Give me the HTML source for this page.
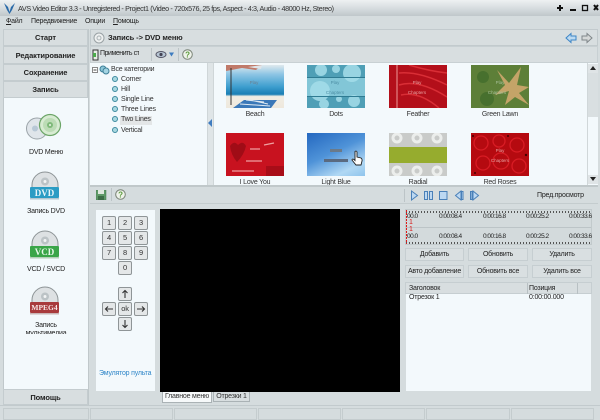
<!DOCTYPE html>
<html><head><meta charset="utf-8">
<style>
html,body{margin:0;padding:0;width:600px;height:420px;overflow:hidden;background:#d5dcde}
body{font-family:"Liberation Sans",sans-serif;font-size:7px;letter-spacing:-.2px;color:#222;position:relative}
.a{position:absolute}
.t{position:absolute;white-space:nowrap}
.c{text-align:center}
.nav{position:absolute;left:3px;width:85px;background:#d8dee0;border:1px solid #c4cccf;box-sizing:border-box;text-align:center;font-weight:bold;font-size:7.5px;letter-spacing:-.1px;color:#222}
.key{position:absolute;width:14px;height:14px;box-sizing:border-box;background:#e4e7e8;border:1px solid #8f9597;border-radius:2px;text-align:center;font-size:7.5px;line-height:12px;color:#333}
.btn{position:absolute;height:13px;box-sizing:border-box;background:#d9dfe1;border:1px solid #c6ced1;text-align:center;font-size:7px;line-height:11px;color:#222;white-space:nowrap;overflow:hidden}
.thumb{position:absolute;width:58px;height:43px;overflow:hidden}
.thumb text{font-family:"Liberation Sans",sans-serif;font-size:4.5px;text-anchor:middle;letter-spacing:0}
.lab{position:absolute;width:82px;text-align:center;font-size:7px;color:#333;white-space:nowrap}
.dot{position:absolute;width:4px;height:4px;border-radius:50%;background:#a8d8e0;border:1px solid #3e8ba0;left:112px}
.tree{position:absolute;font-size:7px;color:#333;left:121px;white-space:nowrap}
.tm{position:absolute;white-space:nowrap;font-size:6.5px;letter-spacing:-.5px;color:#222}
.cell{position:absolute;top:408px;height:12px;border:1px solid #c4ccce;box-sizing:border-box}
</style></head><body>

<!-- title bar -->
<div class="a" style="left:0;top:0;width:600px;height:16px;background:linear-gradient(#eef1f2,#d3d9dc 60%,#bfc7ca)"></div>
<svg class="a" style="left:4px;top:3px" width="11" height="11" viewBox="0 0 11 11"><path d="M0 0L4 4L5.5 9L7 4L11 0L8 7L5.5 11L3 7Z" fill="#2a6aa8"/></svg>
<div class="t" style="left:18px;top:4px;font-size:7.2px;letter-spacing:-.36px;color:#333">AVS Video Editor 3.3 - Unregistered - Project1 (Video - 720x576, 25 fps, Aspect - 4:3, Audio - 48000 Hz, Stereo)</div>
<svg class="a" style="left:555px;top:3px" width="44" height="10" viewBox="0 0 44 10">
<path d="M5 2V8M2 5H8" stroke="#111" stroke-width="2"/><path d="M15 7H21" stroke="#111" stroke-width="2"/>
<rect x="27.5" y="2.5" width="5" height="5" fill="none" stroke="#111" stroke-width="1.3"/>
<path d="M39 2L43 7M43 2L39 7" stroke="#111" stroke-width="2"/></svg>

<!-- menu -->
<div class="t" style="left:6px;top:18px;color:#222"><u>Ф</u>айл</div>
<div class="t" style="left:31px;top:18px;color:#222">Передвижение</div>
<div class="t" style="left:85px;top:18px;color:#222">Опции</div>
<div class="t" style="left:113px;top:18px;color:#222"><u>П</u>омощь</div>

<!-- left nav -->
<div class="a" style="left:3px;top:29px;width:86px;height:376px;background:#f3f9fc;border:1px solid #c0c8cb;box-sizing:border-box"></div>
<div class="nav" style="top:29px;height:17px;line-height:16px">Старт</div>
<div class="nav" style="top:46px;height:18px;line-height:17px">Редактирование</div>
<div class="nav" style="top:64px;height:17px;line-height:16px">Сохранение</div>
<div class="nav" style="top:81px;height:17px;line-height:16px">Запись</div>
<div class="nav" style="top:389px;height:16px;line-height:15px">Помощь</div>

<!-- DVD menu icon -->
<svg class="a" style="left:25px;top:113px" width="38" height="28" viewBox="0 0 38 28">
<circle cx="12" cy="15.5" r="10.5" fill="#dfe5ea" stroke="#9aa3a8"/><circle cx="10" cy="15.5" r="3" fill="#b8c8d6"/>
<circle cx="25" cy="12" r="10.5" fill="#d7ebd2" stroke="#6ba567" stroke-width="1.2"/>
<circle cx="25" cy="12" r="7" fill="#bcdcb6"/><circle cx="25" cy="12" r="3" fill="#7fb97a"/><circle cx="25" cy="12" r="1" fill="#eaf5e8"/></svg>
<div class="t c" style="left:3px;width:86px;top:149px">DVD Меню</div>

<!-- DVD -->
<svg class="a" style="left:29px;top:171px" width="32" height="32" viewBox="0 0 32 32">
<path d="M3 14A13 13 0 0 1 29 14V20H3Z" fill="#dde1e3" stroke="#8d9496"/><circle cx="16" cy="10.5" r="4" fill="#bcc3c6"/><circle cx="16" cy="10.5" r="1.5" fill="#f2f4f5"/>
<rect x="1" y="16" width="29" height="11" rx="1" fill="#2b9cc4"/><rect x="1" y="27" width="29" height="1.5" fill="#b3c7cf"/></svg>
<div class="t c" style="left:30px;width:29px;top:188px;font-family:'Liberation Serif',serif;font-weight:bold;font-size:9px;letter-spacing:0;color:#e8f6fa">DVD</div>
<div class="t c" style="left:3px;width:86px;top:208px">Запись DVD</div>

<!-- VCD -->
<svg class="a" style="left:29px;top:230px" width="32" height="32" viewBox="0 0 32 32">
<path d="M3 14A13 13 0 0 1 29 14V20H3Z" fill="#dde1e3" stroke="#8d9496"/><circle cx="16" cy="10.5" r="4" fill="#bcc3c6"/><circle cx="16" cy="10.5" r="1.5" fill="#f2f4f5"/>
<rect x="1" y="16" width="29" height="11" rx="1" fill="#3aa548"/><rect x="1" y="27" width="29" height="1.5" fill="#b3cfb6"/></svg>
<div class="t c" style="left:30px;width:29px;top:247px;font-family:'Liberation Serif',serif;font-weight:bold;font-size:9px;letter-spacing:0;color:#e8f8ea">VCD</div>
<div class="t c" style="left:3px;width:86px;top:266px">VCD / SVCD</div>

<!-- MPEG4 -->
<svg class="a" style="left:29px;top:286px" width="32" height="32" viewBox="0 0 32 32">
<path d="M3 14A13 13 0 0 1 29 14V20H3Z" fill="#dde1e3" stroke="#8d9496"/><circle cx="16" cy="10.5" r="4" fill="#bcc3c6"/><circle cx="16" cy="10.5" r="1.5" fill="#f2f4f5"/>
<rect x="1" y="16" width="29" height="11" rx="1" fill="#a83a3c"/><rect x="1" y="27" width="29" height="1.5" fill="#c9b5b5"/></svg>
<div class="t c" style="left:30px;width:29px;top:303px;font-family:'Liberation Serif',serif;font-weight:bold;font-size:7.5px;letter-spacing:0;color:#f8e8e8">MPEG4</div>
<div class="t c" style="left:3px;width:86px;top:322px">Запись</div>
<div class="a" style="left:3px;width:86px;top:331px;height:3px;overflow:hidden"><div class="t c" style="left:0;width:86px;top:-1px">мультимедиа</div></div>

<!-- header -->
<div class="a" style="left:90px;top:29px;width:508px;height:17px;background:#d8dee0;border:1px solid #c2cacd;box-sizing:border-box"></div>
<svg class="a" style="left:93px;top:32px" width="12" height="12" viewBox="0 0 12 12"><circle cx="6" cy="6" r="5" fill="#eef0f0" stroke="#9aa2a5"/><circle cx="6" cy="6" r="2" fill="none" stroke="#aab2b5"/></svg>
<div class="t" style="left:108px;top:33px;font-weight:bold;font-size:7.5px;letter-spacing:-.1px;color:#222">Запись -&gt; DVD меню</div>
<svg class="a" style="left:565px;top:32px" width="28" height="12" viewBox="0 0 28 12">
<path d="M1 6L6 1.5V4H11V8H6V10.5Z" fill="#bcdaf2" stroke="#3d85c6"/>
<path d="M27 6L22 1.5V4H17V8H22V10.5Z" fill="#d5d8d8" stroke="#80878a"/></svg>

<!-- toolbar -->
<div class="a" style="left:90px;top:46px;width:508px;height:17px;background:#d8dee0;border:1px solid #c8d0d3;box-sizing:border-box"></div>
<svg class="a" style="left:92px;top:49px" width="8" height="12" viewBox="0 0 8 12"><rect x="1" y="1" width="5" height="10" fill="#e8eee8" stroke="#333"/><rect x="1" y="4" width="3" height="4" fill="#4caa4c"/></svg>
<div class="t" style="left:100px;top:50px;width:39px;overflow:hidden;color:#222;letter-spacing:-.45px">Применить стиль</div>
<div class="a" style="left:151px;top:48px;width:1px;height:13px;background:#bcc4c7"></div>
<svg class="a" style="left:155px;top:50px" width="20" height="9" viewBox="0 0 20 9"><ellipse cx="6" cy="4.5" rx="5" ry="3" fill="#b7c6d4" stroke="#556"/><circle cx="6" cy="4.5" r="1.6" fill="#445"/><path d="M14 2.5H19L16.5 6.5Z" fill="#3d7cc0"/></svg>
<div class="a" style="left:178px;top:48px;width:1px;height:13px;background:#bcc4c7"></div>
<svg class="a" style="left:182px;top:49px" width="11" height="11" viewBox="0 0 11 11"><circle cx="5.5" cy="5.5" r="4.8" fill="#eef2ea" stroke="#7c8579"/><text x="5.5" y="8.3" font-size="8" text-anchor="middle" font-weight="bold" font-family="Liberation Sans" fill="#5a9a3a">?</text></svg>

<!-- content -->
<div class="a" style="left:90px;top:63px;width:508px;height:122px;background:#f3f9fc"></div>
<div class="a" style="left:207px;top:63px;width:7px;height:122px;background:#dfe5e7;border-left:1px solid #cfd6d8;border-right:1px solid #cfd6d8;box-sizing:border-box"></div>
<svg class="a" style="left:208px;top:119px" width="5" height="8" viewBox="0 0 5 8"><path d="M4 0V8L0 4Z" fill="#3f7cc0"/></svg>

<!-- tree -->
<svg class="a" style="left:92px;top:65px" width="18" height="10" viewBox="0 0 18 10"><rect x="0.5" y="2.5" width="5" height="5" fill="#fff" stroke="#888"/><path d="M1.5 5H4.5" stroke="#444"/><circle cx="11" cy="4" r="3" fill="#8cc6d8" stroke="#3e7f98"/><circle cx="14" cy="6" r="3" fill="#a4d4e2" stroke="#3e7f98"/></svg>
<div class="tree" style="left:111px;top:66px">Все категории</div>
<div class="dot" style="top:76px"></div><div class="tree" style="top:76px">Corner</div>
<div class="dot" style="top:86px"></div><div class="tree" style="top:86px">Hill</div>
<div class="dot" style="top:96px"></div><div class="tree" style="top:96px">Single Line</div>
<div class="dot" style="top:106px"></div><div class="tree" style="top:106px">Three Lines</div>
<div class="a" style="left:120px;top:116px;width:32px;height:9px;background:#e3e6e7"></div>
<div class="dot" style="top:116px"></div><div class="tree" style="top:116px">Two Lines</div>
<div class="dot" style="top:127px"></div><div class="tree" style="top:127px">Vertical</div>

<!-- row 1 -->
<div class="thumb" style="left:226px;top:65px;background:linear-gradient(#dfe9ee 0,#8cc4e4 22%,#3f9fcf 50%,#1a7fb5 68%,#f0ede4 73%,#eee8dc 100%)">
<svg width="58" height="43" style="position:absolute;left:0;top:0"><path d="M0 0H36L30 5L16 3L0 6Z" fill="#c07a6a"/><path d="M36 0L35 4L22 2Z" fill="#dfe4e8"/><path d="M5 3V40" stroke="#333" stroke-width="1"/><path d="M7 43L18 35H51L45 43Z" fill="#3a78b8"/><path d="M20 35L38 37M24 35L42 39M14 39L44 41" stroke="#dfeaf2"/><text x="28" y="19" fill="#6a7f90">Play</text></svg></div>
<div class="lab" style="left:214px;top:111px">Beach</div>

<div class="thumb" style="left:307px;top:65px;background:#52a5bc">
<svg width="58" height="43"><rect width="58" height="43" fill="#4f9fb6"/><rect y="13" width="58" height="18" fill="#8fd0e0" opacity=".8"/><g fill="#a5deea" opacity=".85"><circle cx="14" cy="5" r="6"/><circle cx="29" cy="4" r="4"/><circle cx="45" cy="8" r="9"/><circle cx="13" cy="26" r="10"/><circle cx="47" cy="36" r="6"/><circle cx="17" cy="39" r="5"/><circle cx="32" cy="34" r="3"/></g><rect y="31" width="58" height="1" fill="#2f7b92"/><rect y="12" width="58" height="1" fill="#2f7b92"/><text x="28" y="19" fill="#4d8fa5">Play</text><text x="28" y="29" fill="#4d8fa5">Chapters</text></svg></div>
<div class="lab" style="left:295px;top:111px">Dots</div>

<div class="thumb" style="left:389px;top:65px;background:#b00e18">
<svg width="58" height="43"><rect width="58" height="43" fill="#b30f1a"/><path d="M8 0V43" stroke="#ee9a98" stroke-width="1"/><path d="M10 8Q30 6 58 20M10 20Q30 14 58 32M12 30Q30 26 50 43M20 0Q40 6 58 8" stroke="#d92e36" stroke-width="1.5" fill="none"/><text x="28" y="19" fill="#e8a0a0">Play</text><text x="28" y="29" fill="#e8a0a0">Chapters</text></svg></div>
<div class="lab" style="left:377px;top:111px">Feather</div>

<div class="thumb" style="left:471px;top:65px;background:#587c36">
<svg width="58" height="43"><rect width="58" height="43" fill="#5d7f38"/><path d="M26 5L38 18L50 2L46 20L58 22L48 28L58 40L44 32L34 40L38 26L24 30L34 20Z" fill="#c4a468"/><g fill="#3f6a2a" opacity=".7"><circle cx="12" cy="12" r="6"/><circle cx="16" cy="34" r="7"/></g><text x="29" y="19" fill="#a8c09a">Play</text><text x="26" y="29" fill="#a8c09a">Chapters</text></svg></div>
<div class="lab" style="left:459px;top:111px">Green Lawn</div>

<!-- row 2 -->
<div class="thumb" style="left:226px;top:133px;background:#c4101e">
<svg width="58" height="43"><rect width="58" height="43" fill="#c8121f"/><path d="M4 13Q8 7 12 12Q17 7 20 13Q18 22 11 29Q5 22 4 13Z" fill="#a00c16"/><path d="M24 16H34M38 12L48 10M20 28H36M6 38H28" stroke="#efa0a0" stroke-width="1.2"/><rect y="33" x="40" width="18" height="10" fill="#a80d18"/></svg></div>
<div class="thumb" style="left:307px;top:133px;background:linear-gradient(155deg,#2468c0 0,#4f93d8 45%,#b0d8f4 80%,#8fc4ec 100%)">
<svg width="58" height="43"><rect x="23" y="16" width="12" height="3" fill="#6a7a8a"/><rect x="17" y="26" width="24" height="3" fill="#5a6a80"/></svg></div>
<div class="thumb" style="left:389px;top:133px;background:#c9cbc9">
<svg width="58" height="43"><g fill="none" stroke="#eceeec" stroke-width="3"><circle cx="8" cy="5" r="4"/><circle cx="28" cy="5" r="4"/><circle cx="48" cy="5" r="4"/><circle cx="8" cy="38" r="4"/><circle cx="28" cy="38" r="4"/><circle cx="48" cy="38" r="4"/></g><rect y="14" width="58" height="16" fill="#96ac2e"/></svg></div>
<div class="thumb" style="left:471px;top:133px;background:#b80b12">
<svg width="58" height="43"><rect width="58" height="43" fill="#b50a10"/><g fill="none" stroke="#d81c24" stroke-width="1.3"><circle cx="10" cy="10" r="7"/><circle cx="28" cy="8" r="6"/><circle cx="46" cy="12" r="7"/><circle cx="12" cy="30" r="7"/><circle cx="30" cy="28" r="8"/><circle cx="48" cy="33" r="7"/></g><g fill="#400"><circle cx="2" cy="3" r="1"/><circle cx="55" cy="22" r="1.2"/><circle cx="4" cy="40" r="1"/><circle cx="37" cy="3" r="1"/></g><text x="29" y="19" fill="#e8a0a0">Play</text><text x="29" y="29" fill="#e8a0a0">Chapters</text></svg></div>
<svg class="a" style="left:351px;top:150px" width="12" height="16" viewBox="0 0 12 16"><path d="M4 1.5Q5.5 0.5 6 2V7L10 8Q11.5 9 11 11L10 15H5L1 10Q1 8.5 3 9.5L4 10.5Z" fill="#fff" stroke="#222" stroke-width="0.9"/></svg>

<div class="a" style="left:214px;top:178px;width:373px;height:7px;overflow:hidden">
<div class="lab" style="left:0;top:1px">I Love You</div>
<div class="lab" style="left:81px;top:1px">Light Blue</div>
<div class="lab" style="left:163px;top:1px">Radial</div>
<div class="lab" style="left:245px;top:1px">Red Roses</div>
</div>

<!-- scrollbar -->
<div class="a" style="left:587px;top:63px;width:11px;height:122px;background:#f3f9fc;border-left:1px solid #d0d7d9;box-sizing:border-box"></div>
<div class="a" style="left:588px;top:64px;width:10px;height:9px;background:#dfe4e6"></div>
<svg class="a" style="left:590px;top:66px" width="6" height="4"><path d="M0 4H6L3 0Z" fill="#222"/></svg>
<div class="a" style="left:588px;top:73px;width:10px;height:44px;background:#d9dfe1"></div>
<div class="a" style="left:588px;top:175px;width:10px;height:9px;background:#dfe4e6"></div>
<svg class="a" style="left:590px;top:177px" width="6" height="4"><path d="M0 0H6L3 4Z" fill="#222"/></svg>

<!-- splitter -->
<div class="a" style="left:90px;top:185px;width:508px;height:2px;background:#c0c8ca"></div>
<div class="a" style="left:90px;top:203px;width:508px;height:1px;background:#c4ccce"></div>

<!-- toolbar 2 -->
<svg class="a" style="left:96px;top:190px" width="11" height="10" viewBox="0 0 11 10"><rect width="10" height="10" fill="#5f9a68" stroke="#467a50" stroke-width=".5"/><rect x="2" y="0" width="6" height="4" fill="#dfe9df"/><rect x="2" y="6" width="6" height="4" fill="#3d6e47"/></svg>
<div class="a" style="left:111px;top:188px;width:1px;height:13px;background:#bcc4c7"></div>
<svg class="a" style="left:115px;top:189px" width="11" height="11" viewBox="0 0 11 11"><circle cx="5.5" cy="5.5" r="4.8" fill="#eef2ea" stroke="#7c8579"/><text x="5.5" y="8.3" font-size="8" text-anchor="middle" font-weight="bold" font-family="Liberation Sans" fill="#5a9a3a">?</text></svg>
<div class="a" style="left:404px;top:189px;width:1px;height:13px;background:#bcc4c7"></div>
<svg class="a" style="left:410px;top:190px" width="70" height="11" viewBox="0 0 70 11" fill="#bcd8f2" stroke="#4a80b8">
<path d="M1.5 1L7.5 5.5L1.5 10Z"/>
<rect x="14.5" y="1.5" width="3" height="8"/><rect x="19.5" y="1.5" width="3" height="8"/>
<rect x="29.5" y="1.5" width="7.5" height="8"/>
<path d="M51 1V10L45.5 5.5Z"/><rect x="51.5" y="1.5" width="1.5" height="8"/>
<path d="M63 1V10L68.5 5.5Z"/><rect x="60.5" y="1.5" width="1.5" height="8"/></svg>
<div class="t" style="left:537px;top:192px;color:#222">Пред.просмотр</div>

<!-- remote panel -->
<div class="a" style="left:96px;top:210px;width:59px;height:181px;background:#f3f9fc"></div>
<div class="key" style="left:102px;top:216px">1</div><div class="key" style="left:118px;top:216px">2</div><div class="key" style="left:134px;top:216px">3</div>
<div class="key" style="left:102px;top:231px">4</div><div class="key" style="left:118px;top:231px">5</div><div class="key" style="left:134px;top:231px">6</div>
<div class="key" style="left:102px;top:246px">7</div><div class="key" style="left:118px;top:246px">8</div><div class="key" style="left:134px;top:246px">9</div>
<div class="key" style="left:118px;top:261px">0</div>
<div class="key" style="left:118px;top:287px"><svg width="12" height="12" viewBox="0 0 12 12" style="display:block"><path d="M6 10V2.5M3.5 5L6 2.5L8.5 5" fill="none" stroke="#333" stroke-width="1.1"/></svg></div>
<div class="key" style="left:102px;top:302px"><svg width="12" height="12" viewBox="0 0 12 12" style="display:block"><path d="M10 6H2.5M5 3.5L2.5 6L5 8.5" fill="none" stroke="#333" stroke-width="1.1"/></svg></div>
<div class="key" style="left:118px;top:302px">ok</div>
<div class="key" style="left:134px;top:302px"><svg width="12" height="12" viewBox="0 0 12 12" style="display:block"><path d="M2 6H9.5M7 3.5L9.5 6L7 8.5" fill="none" stroke="#333" stroke-width="1.1"/></svg></div>
<div class="key" style="left:118px;top:317px"><svg width="12" height="12" viewBox="0 0 12 12" style="display:block"><path d="M6 2V9.5M3.5 7L6 9.5L8.5 7" fill="none" stroke="#333" stroke-width="1.1"/></svg></div>
<div class="t" style="left:99px;top:370px;color:#2f86c8">Эмулятор пульта</div>

<!-- video -->
<div class="a" style="left:160px;top:209px;width:240px;height:183px;background:#000"></div>

<!-- tabs -->
<div class="a" style="left:162px;top:392px;width:50px;height:11px;background:#f6f9fa;border:1px solid #aab2b5;border-top:none;box-sizing:border-box;line-height:10px;text-align:center;color:#333;white-space:nowrap">Главное меню</div>
<div class="a" style="left:213px;top:392px;width:37px;height:10px;background:#d8dee0;border:1px solid #aab2b5;border-top:none;box-sizing:border-box;line-height:9px;text-align:center;color:#333;white-space:nowrap">Отрезки 1</div>

<!-- timeline -->
<div class="a" style="left:405px;top:209px;width:187px;height:36px;background:#d3dadc;border:1px solid #c2cacc;box-sizing:border-box"></div>
<div class="a" style="left:406px;top:211px;width:185px;height:2px;background:repeating-linear-gradient(90deg,#555 0 1px,transparent 1px 3px)"></div>
<div class="a" style="left:406px;top:242px;width:185px;height:2px;background:repeating-linear-gradient(90deg,#555 0 1px,transparent 1px 3px)"></div>
<div class="a" style="left:406px;top:227px;width:185px;height:1px;background:#bcc4c7"></div>
<div class="a" style="left:406px;top:210px;width:1px;height:34px;background:repeating-linear-gradient(#e01818 0 2px,transparent 2px 3px)"></div>
<div class="t" style="left:409px;top:219px;font-size:7px;color:#d81818">1</div>
<div class="t" style="left:409px;top:226px;font-size:7px;color:#d81818">1</div>
<div class="tm" style="left:407px;top:213px">00.0</div>
<div class="tm" style="left:439px;top:213px">0:00:08.4</div>
<div class="tm" style="left:483px;top:213px">0:00:16.8</div>
<div class="tm" style="left:526px;top:213px">0:00:25.2</div>
<div class="tm" style="left:569px;top:213px">0:00:33.6</div>
<div class="tm" style="left:407px;top:233px">00.0</div>
<div class="tm" style="left:439px;top:233px">0:00:08.4</div>
<div class="tm" style="left:483px;top:233px">0:00:16.8</div>
<div class="tm" style="left:526px;top:233px">0:00:25.2</div>
<div class="tm" style="left:569px;top:233px">0:00:33.6</div>

<!-- buttons -->
<div class="btn" style="left:405px;top:248px;width:59px">Добавить</div>
<div class="btn" style="left:468px;top:248px;width:60px">Обновить</div>
<div class="btn" style="left:532px;top:248px;width:60px">Удалить</div>
<div class="btn" style="left:405px;top:265px;width:59px">Авто добавление</div>
<div class="btn" style="left:468px;top:265px;width:60px">Обновить все</div>
<div class="btn" style="left:532px;top:265px;width:60px">Удалить все</div>

<!-- list -->
<div class="a" style="left:405px;top:282px;width:187px;height:12px;background:#d8dee0;border:1px solid #c6ced1;box-sizing:border-box"></div>
<div class="a" style="left:527px;top:283px;width:1px;height:11px;background:#b8c0c3"></div>
<div class="a" style="left:577px;top:283px;width:1px;height:11px;background:#b8c0c3"></div>
<div class="t" style="left:409px;top:285px;color:#222">Заголовок</div>
<div class="t" style="left:529px;top:285px;color:#222">Позиция</div>
<div class="a" style="left:406px;top:294px;width:185px;height:97px;background:#f3f9fc"></div>
<div class="t" style="left:409px;top:294px;color:#222">Отрезок 1</div>
<div class="t" style="left:529px;top:294px;color:#222">0:00:00.000</div>

<!-- status bar -->
<div class="a" style="left:0;top:405px;width:600px;height:1px;background:#c2cacd"></div>
<div class="cell" style="left:3px;width:86px"></div>
<div class="cell" style="left:90px;width:83px"></div>
<div class="cell" style="left:174px;width:83px"></div>
<div class="cell" style="left:258px;width:83px"></div>
<div class="cell" style="left:342px;width:83px"></div>
<div class="cell" style="left:426px;width:84px"></div>
<div class="cell" style="left:511px;width:83px"></div>
</body></html>
